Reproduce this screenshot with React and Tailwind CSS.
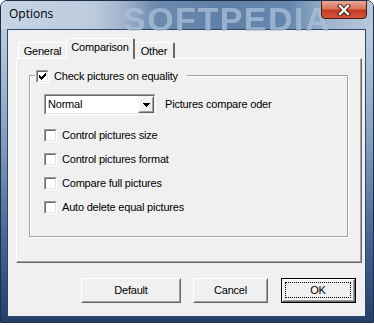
import React from "react";

function Check() {
  const pts = [
    [9, 3], [8, 4], [9, 4], [3, 5], [7, 5], [8, 5], [9, 5],
    [3, 6], [4, 6], [6, 6], [7, 6], [8, 6],
    [3, 7], [4, 7], [5, 7], [6, 7], [7, 7],
    [4, 8], [5, 8], [6, 8], [5, 9],
  ];
  return (
    <svg width="13" height="13" viewBox="0 0 13 13" className="absolute left-0 top-0" shapeRendering="crispEdges">
      {pts.map(([x, y], i) => (
        <rect key={i} x={x} y={y} width="1" height="1" fill="#000" />
      ))}
    </svg>
  );
}

function CheckBox({ checked }) {
  return (
    <div className="relative w-[13px] h-[13px] shrink-0 bg-white border-t border-l border-t-[#a0a0a0] border-l-[#a0a0a0] border-b border-r border-b-white border-r-white">
      <div className="absolute inset-0 border-t border-l border-t-[#696969] border-l-[#696969] border-b border-r border-b-[#e3e3e3] border-r-[#e3e3e3]" />
      {checked && (
        <div className="absolute -left-px -top-px w-[13px] h-[13px]">
          <Check />
        </div>
      )}
    </div>
  );
}

function Row({ label }) {
  return (
    <div className="flex items-center h-[13px]">
      <CheckBox />
      <span className="ml-[5px] leading-none">{label}</span>
    </div>
  );
}

function Btn({ children, def, className = "" }) {
  if (def) {
    return (
      <div className={"h-[25px] border border-black " + className}>
        <div className="h-full border-t border-l border-t-white border-l-white border-b border-r border-b-[#696969] border-r-[#696969]">
          <div className="relative h-full border-b border-r border-b-[#a0a0a0] border-r-[#a0a0a0] flex items-center justify-center">
            <div className="absolute left-[2px] right-[2px] top-[2px] bottom-[2px] border border-dotted border-black" />
            <span className="leading-none">{children}</span>
          </div>
        </div>
      </div>
    );
  }
  return (
    <div className={"h-[25px] border-t border-l border-t-white border-l-white border-b border-r border-b-[#696969] border-r-[#696969] " + className}>
      <div className="h-full border-t border-l border-t-[#f0f0f0] border-l-[#f0f0f0] border-b border-r border-b-[#a0a0a0] border-r-[#a0a0a0] flex items-center justify-center">
        <span className="leading-none">{children}</span>
      </div>
    </div>
  );
}

export default function App() {
  return (
    <div className="w-[374px] h-[325px] bg-white font-['Liberation_Sans',Arial,sans-serif] text-[11px] tracking-[-0.2px] text-black">
      <div className="relative w-[374px] h-[323px] flex flex-col rounded-t-[7px] border border-[#1c2e48] overflow-hidden bg-[linear-gradient(180deg,#c4d3e4_0%,#aabfd6_20%,#7f9bbd_45%,#44648f_75%,#223f69_100%)]">
        <div className="relative h-[28px] flex items-start justify-between bg-[linear-gradient(90deg,#c6d4e4_0%,#bccbdd_25%,#9fb3cb_33%,#6a89ae_42%,#5f80a7_60%,#6788ae_78%,#9fb4cd_88%,#b7c8dc_100%)]">
          <div className="absolute left-[122px] top-[-3px] text-[34px] font-bold tracking-[1.5px] text-[#adc1d9] opacity-75 blur-[0.6px] leading-none pt-[4px] select-none font-['Liberation_Sans',Arial,sans-serif]">
            SOFTPEDIA
          </div>
          <span className="relative ml-[8px] mt-[7px] text-[12px] leading-none tracking-normal font-['Open_Sans','Noto_Sans',sans-serif] text-black">
            Options
          </span>
          <div className="relative mr-[6px] w-[46px] h-[19px] -mt-px rounded-b-[4px] border border-[#4a1c14] bg-[linear-gradient(180deg,#e9a898_0%,#d9745d_45%,#c23c22_55%,#d4553a_100%)] flex items-center justify-center">
            <svg width="14" height="12" viewBox="0 0 14 12">
              <path d="M3 2 L11 10 M11 2 L3 10" stroke="#3a1510" strokeWidth="4.2" strokeLinecap="square" />
              <path d="M3 2 L11 10 M11 2 L3 10" stroke="#ffffff" strokeWidth="2.4" strokeLinecap="square" />
            </svg>
          </div>
        </div>

        <div className="ml-[6px] mr-[7px] mb-[5px] flex-1 border border-[#2f4769] bg-[#f0f0f0] flex flex-col">
          <div className="ml-[8px] mr-[3px] mt-[8px] flex flex-col">
            <div className="flex items-end h-[20px] pl-[2px]">
              <div className="w-[48px] h-[16px] rounded-tl-[2px] border-t border-l border-t-white border-l-white flex items-center justify-center">
                <span className="leading-none pt-[1px]">General</span>
              </div>
              <div className="relative z-10 -mb-px w-[69px] h-[21px] bg-[#f0f0f0] rounded-tl-[2px] rounded-tr-[2px] border-t border-l border-t-white border-l-white border-r-2 border-r-[#696969] flex items-start justify-center pt-[3px]">
                <span className="leading-none">Comparison</span>
              </div>
              <div className="w-[40px] h-[16px] rounded-tr-[2px] border-t border-t-white border-r-2 border-r-[#696969] flex items-center justify-center">
                <span className="leading-none pt-[1px]">Other</span>
              </div>
            </div>
            <div className="h-[205px] border-t border-l border-t-white border-l-white border-b border-r border-b-[#696969] border-r-[#696969]">
              <div className="h-full border-b border-r border-b-[#a0a0a0] border-r-[#a0a0a0] pl-[12px] pt-[16px]">
                <div className="relative w-[319px] h-[162px] border border-[#a0a0a0] shadow-[1px_1px_0_#ffffff,inset_1px_1px_0_#ffffff]">
                  <div className="absolute left-[5px] top-[-7px] h-[14px] pl-[1px] pr-[9px] bg-[#f0f0f0] flex items-center">
                    <CheckBox checked />
                    <span className="ml-[5px] leading-none">Check pictures on equality</span>
                  </div>
                  <div className="pl-[14px] pt-[18px] flex flex-col">
                    <div className="flex items-center h-[21px]">
                      <div className="w-[112px] h-[21px] bg-white border-t border-l border-t-[#a0a0a0] border-l-[#a0a0a0] border-b border-r border-b-white border-r-white">
                        <div className="h-full border-t border-l border-t-[#696969] border-l-[#696969] border-b border-r border-b-[#e3e3e3] border-r-[#e3e3e3] flex items-stretch">
                          <div className="flex-1 flex items-center pl-[2px]">
                            <span className="leading-none">Normal</span>
                          </div>
                          <div className="w-[16px] bg-[#f0f0f0] border-t border-l border-t-[#f0f0f0] border-l-[#f0f0f0] border-b border-r border-b-[#696969] border-r-[#696969]">
                            <div className="h-full border-t border-l border-t-white border-l-white border-b border-r border-b-[#a0a0a0] border-r-[#a0a0a0] flex items-center justify-center">
                              <svg width="7" height="4" viewBox="0 0 7 4" shapeRendering="crispEdges">
                                <path d="M0 0 H7 V1 H6 V2 H5 V3 H4 V4 H3 V3 H2 V2 H1 V1 H0 Z" fill="#000" />
                              </svg>
                            </div>
                          </div>
                        </div>
                      </div>
                      <span className="ml-[9px] leading-none">Pictures compare oder</span>
                    </div>
                    <div className="mt-[14px] flex flex-col gap-[11px]">
                      <Row label="Control pictures size" />
                      <Row label="Control pictures format" />
                      <Row label="Compare full pictures" />
                      <Row label="Auto delete equal pictures" />
                    </div>
                  </div>
                </div>
              </div>
            </div>
          </div>
          <div className="mt-[15px] flex justify-end pr-[9px]">
            <Btn className="w-[100px] mr-[12px]">Default</Btn>
            <Btn className="w-[75px] mr-[13px]">Cancel</Btn>
            <Btn def className="w-[75px]">OK</Btn>
          </div>
        </div>
      </div>
    </div>
  );
}
